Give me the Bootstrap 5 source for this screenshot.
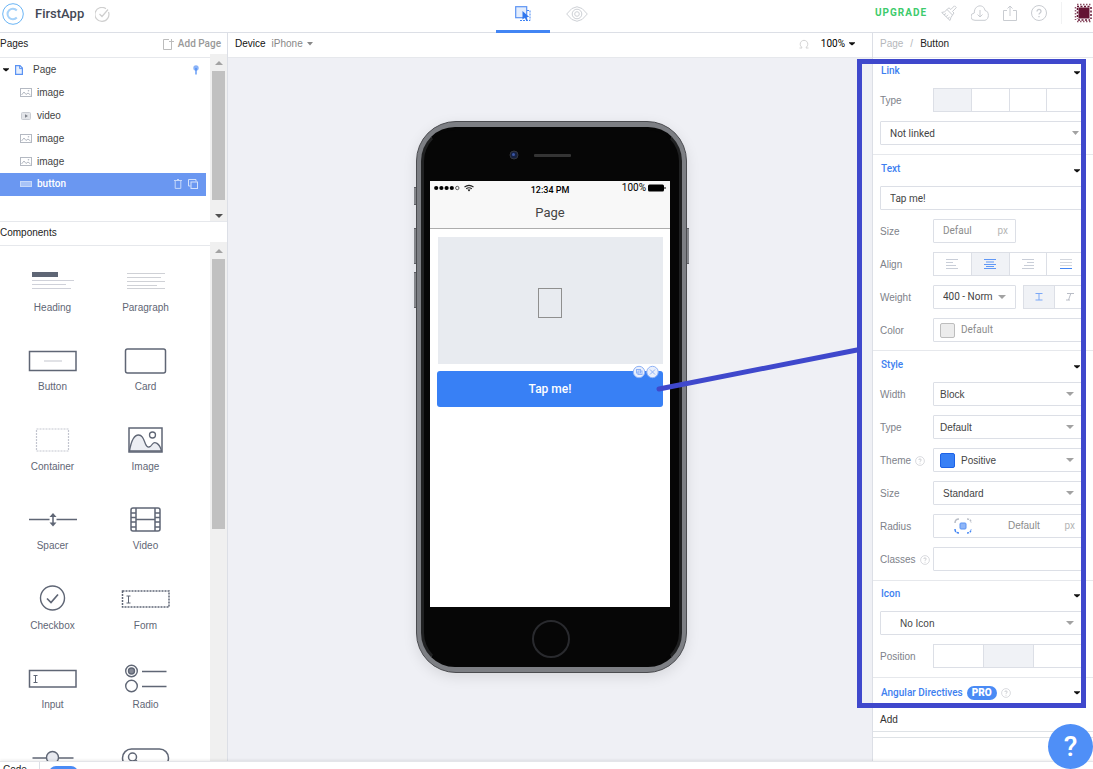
<!DOCTYPE html>
<html lang="en">
<head>
<meta charset="utf-8">
<meta name="viewport" content="width=device-width, initial-scale=1">
<title>FirstApp</title>
<link href="https://cdn.jsdelivr.net/npm/bootstrap@5.3.0/dist/css/bootstrap.min.css" rel="stylesheet">
<style>
:root{--line:#dcdfe6;--accent:#4285f4;--ink:#5f6675;--mute:#7e828a}
body{font-family:Roboto,"Liberation Sans",sans-serif;font-size:10px;line-height:12px;color:#222;background:#fff}
svg{display:block;flex:none}
button{font:inherit;color:inherit;background:none;border:0;padding:0}
a{color:inherit;text-decoration:none}
.app{height:100vh}
.plain{font-family:"Liberation Sans",Arial,sans-serif}
.side-l{width:228px;flex:none;border-right:1px solid var(--line)}
.side-r{width:221px;flex:none;border-left:1px solid var(--line)}
.topbar{height:33px;border-bottom:1px solid var(--line)}
.topbar .brand{width:228px;flex:none;padding:0 0 4px 2px;gap:11px}
.app-name{font-size:13px;line-height:18px;color:#444956;font-weight:500}
.tab-btn{width:54px;height:33px;padding-bottom:5px}
.tab-btn.active{border-bottom:3px solid var(--accent);padding-bottom:2px}
.tools{width:221px;flex:none;padding:0 0 6px 3px;overflow:hidden;color:#c9ccd1;gap:14px}
.upgrade{font-size:10px;font-weight:700;letter-spacing:1px;color:#3dcb6c}
.bar{height:25px;flex:none;border-bottom:1px solid #e6e8ec;padding-bottom:3px}
.tree-area{height:164px;flex:none;border-bottom:1px solid #e6e8ec}
.tree{padding:0 4px 0 0}
.tree-row{height:23px;padding:0 7px 0 20px;gap:5px;color:#444}
.tree-row.page-row{padding-left:3px}
.tree-row.active{background:#6a97f1;color:#fff;padding-bottom:1px}
.track{width:17px;flex:none;background:#f0f0f0;margin-top:-4px;padding:0 2px}
.track .thumb{background:#c1c1c1}
.arrow{height:17px;flex:none}
.comps{display:grid;grid-template-columns:93px 93px;grid-template-rows:repeat(4,79px 80px);padding:14px 0 0 6px;color:var(--ink);line-height:14px}
.comps svg{margin-bottom:1px}
.canvas{background:#eff0f5}
.stage{padding-top:63px}
.phone{width:271px;margin-left:3px;padding:5px 4px 5px 4px;border-radius:40px;background:#7d7f84;border:1px solid #4b4c50;box-shadow:0 4px 14px rgba(0,0,0,.10)}
.glass{border-radius:34px;background:#060606;border:3px solid #202122;border-top-color:#060606;border-bottom-color:#060606;padding:51px 9px 57px 6px}
.screen{height:426px;width:240px;background:#fff}
.navhead{height:48px;background:#f8f8f8;border-bottom:1px solid #adadad;color:#000}
.statusline{height:14px;padding:0 4px;font-size:9px}
.page-title{font-size:13px;line-height:16px;color:#444;padding-top:6px}
.thumb-box{height:127px;background:#e8ebf0;margin:8px 7px 7px 8px;padding:4px 2px 0 0}
.tap{height:36px;width:226px;margin-left:7px;background:#3880f5;color:#fff;border-radius:3px;font-size:12px;font-weight:500}
.camera{top:28px;left:92px}
.home{bottom:14px;left:115px;width:38px;height:38px;border:2px solid #292a2e;border-radius:50%}
.knob{width:2px;background:#85878c;border:1px solid #5d5e63;border-width:1px 0}
.sect{padding:0 10px 9px 7px;border-bottom:1px solid #e6e8ec}
.sect-title{height:30px;width:100%;padding:0 6px 4px 1px;color:#3e7ff0;font-weight:500;line-height:12px}
.sect-title .caret{margin-top:4px}
.prow{height:24px;margin-bottom:9px}
.prow:last-child{margin-bottom:0}
.plabel{width:53px;flex:none;color:var(--mute);padding-top:2px;font-family:"Liberation Sans",Arial,sans-serif}
.box{height:24px;border:1px solid var(--line);border-radius:1px;background:#fff;color:#444;font-size:10px;line-height:12px;padding:0 9px;min-width:0;appearance:none;box-shadow:none}
select.box{background:#fff url("data:image/svg+xml,%3Csvg xmlns='http://www.w3.org/2000/svg' width='8' height='4'%3E%3Cpath d='M0 0h8L4 4z' fill='%23a2a2a2'/%3E%3C/svg%3E") no-repeat right 9px center;padding-right:18px}
select.edge{background-position:right 6px center;background-size:7px 4px;padding-top:1px}
select.wide{background-position:right 11px center;padding-top:1px}
.tight{padding-left:6px}
.box input{border:0;padding:0;min-width:0;color:#8c8c8c;background:none;outline:0;line-height:12px}
.short{width:83px;flex:none}
.seg{height:24px;border:1px solid var(--line);display:flex;flex:1;margin-right:-1px}
.seg.four{margin-right:1px}
.seg button{flex:1;display:flex;align-items:center;justify-content:center}
.seg button+button{border-left:1px solid var(--line)}
.seg .on{background:#f0f2f6}
.seg.thirds{margin-right:2px}
.swatch{width:15px;height:15px;border-radius:2px;border:1px solid #1d62e6;background:#3880f5;flex:none}
.pro{background:#4a8bf5;color:#fff;border-radius:7px;font-weight:900;padding:1px 5px;font-size:10px}
.frame{left:-16px;top:26px;width:229px;height:649px;border:5px solid #3f48cc;pointer-events:none;z-index:3}
.pointer{right:234px;top:313px;z-index:3}
.help{right:0;bottom:0;width:45px;height:45px;border-radius:50%;background:#4f8ff7;color:#fff;font-size:28px;font-weight:500;line-height:45px;z-index:4}
.foot{height:8px;flex:none;overflow:hidden;background:#fff;border-top:1px solid #e4e5e9;box-shadow:0 -1px 3px rgba(0,0,0,.08);z-index:2}
.foot .tabname{width:40px;height:20px;flex:none;padding:2px 0 0 3px;border-right:1px solid var(--line)}
.foot .pill{width:29px;height:14px;border-radius:7px;background:#4a8bf5;margin:4px 0 0 9px}
</style>
</head>
<body>
<svg width="0" height="0" class="position-absolute" aria-hidden="true">
<defs>
<symbol id="pic" viewBox="0 0 12 9"><rect x=".5" y=".5" width="11" height="8" fill="#fff" stroke="#b4b9c2"/><path d="M1.500 7 4 4l2 2.500 2-1.500 2.500 2" fill="none" stroke="#b4b9c2"/><circle cx="8.500" cy="2.800" r=".8" fill="#b4b9c2"/></symbol>
<symbol id="q" viewBox="0 0 10 10"><circle cx="5" cy="5" r="4.400" fill="none" stroke="#d0d2d7" stroke-width=".8"/><path d="M3.800 4c0-1.600 2.400-1.500 2.400 0 0 .8-1.200.9-1.200 1.800M5 6.800v.8" fill="none" stroke="#bfc2c7" stroke-width=".8"/></symbol>
<symbol id="dn" viewBox="0 0 6 4"><path d="M0 .3h6v.7L3.500 3.200h-1L0 1z" fill="#111"/></symbol>
</defs>
</svg>
<div class="app d-flex flex-column overflow-hidden position-relative">
<header class="topbar d-flex flex-shrink-0">
  <div class="brand d-flex align-items-center">
    <svg width="22" height="22" viewBox="0 0 22 22" fill="none" stroke="#6bb5f5"><circle cx="11" cy="11" r="10.300"/><path d="M14.800 7.500a5.300 5.300 0 1 0 0 7" stroke-width="2" stroke="#a6d2f9"/></svg>
    <span class="app-name">FirstApp</span>
    <svg width="17" height="15" viewBox="0 0 17 15" fill="none" stroke="#cfcfcf" stroke-width="1.200"><path d="M13.500 5A7 7 0 1 1 11 1.700M4.500 7l2.500 2.500 6-7"/></svg>
  </div>
  <nav class="d-flex flex-fill justify-content-center">
    <button class="tab-btn active d-flex align-items-center justify-content-center" aria-label="Design">
      <svg width="16" height="16" viewBox="0 0 16 16"><rect x=".7" y=".7" width="11" height="11" fill="#e3edfd" stroke="#5b93f3" stroke-width="1.200"/><path d="M5 14.500h10v-10h-3" fill="none" stroke="#4285f4" stroke-dasharray="2 1"/><path d="M7.500 5v8.500l2.300-2 1.300 3 1.500-.7-1.200-2.800h2.800z" fill="#2f77ee"/></svg>
    </button>
    <button class="tab-btn d-flex align-items-center justify-content-center" aria-label="Preview">
      <svg width="22" height="16" viewBox="0 0 22 16" fill="none" stroke="#cdd0d5"><path d="M.7 8Q11-6.500 21.300 8 11 22.500.7 8z"/><circle cx="11" cy="8" r="4.800"/><circle cx="11" cy="8" r="2.300"/></svg>
    </button>
  </nav>
  <div class="tools d-flex align-items-center">
    <a href="#" class="upgrade">UPGRADE</a>
    <button aria-label="Theme"><svg width="16" height="16" viewBox="0 0 16 16" fill="none" stroke="currentColor"><path d="M.7 7.500Q4 7.500 6 4.500l5.500 5.500q-2 2.500-2.500 5.500zM6 4.500l2-1.700 1.800 1.700L13.500.8l1.800 1.800L11.500 6.500 13 8l-1.500 2M3 9.800 5 8.500M5 11.800l2-2M7 13.800l1.500-2"/></svg></button>
    <button aria-label="Download"><svg width="18" height="16" viewBox="0 0 18 16" fill="none" stroke="currentColor"><path d="M4 15.300A3.600 3.600 0 0 1 3.300 8C3-.5 13-1.500 14 5.500c4.500.5 4.500 9 0 9.800zM9 5v7M6.500 9.500 9 12l2.500-2.500"/></svg></button>
    <button aria-label="Share"><svg width="14" height="16" viewBox="0 0 14 16" fill="none" stroke="currentColor"><path d="M4 5.500H.5v10h13v-10H10M7 11V1M4.500 3.500 7 1l2.500 2.500"/></svg></button>
    <button aria-label="Help"><svg width="16" height="16" viewBox="0 0 16 16" fill="none" stroke="currentColor"><circle cx="8" cy="8" r="7.500"/><path d="M6 6.500c0-2.800 4-2.600 4 0C10 8 8 8 8 9.500M8 11v1.300" stroke-width="1.300"/></svg></button>
    <div class="d-flex align-items-center" style="gap:12px"><span class="vr" style="height:22px"></span>
    <svg width="18" height="20" viewBox="0 0 18 20"><rect x="4.500" y="4.500" width="11" height="11" fill="#641433"/><path d="M3 1.500h15M3 18.500h15M1.500 4v13" fill="none" stroke="#8d5267" stroke-width="1.500" stroke-dasharray="1.500 1.500"/><path d="M3 3.500h13M3.500 5v11M4 17h12M17 4v12" fill="none" stroke="#641433" stroke-width="1.500" stroke-dasharray="2 1.500"/></svg></div>
  </div>
</header>
<div class="d-flex flex-fill position-relative" style="min-height:0">
  <aside class="side-l plain d-flex flex-column">
    <div class="bar d-flex align-items-center justify-content-between" style="padding-right:6px">
      <span>Pages</span>
      <button class="d-flex align-items-center gap-1" style="color:#999;font-family:Roboto,sans-serif"><svg width="11" height="12" viewBox="0 0 11 12" fill="none" stroke="#bcbcbc"><path d="M6 1.500H.5v10h8V6M8.500 1v5M6 3.500h5"/></svg><span class="fw-medium">Add Page</span></button>
    </div>
    <div class="tree-area d-flex">
      <div class="tree flex-fill">
        <div class="tree-row page-row d-flex align-items-center">
          <svg width="6" height="4"><use href="#dn"/></svg>
          <svg class="me-1" width="10" height="10" viewBox="-1 0 10 10"><path d="M.6.6h4.400l2.400 2.400v6.400H.6z" fill="#e6effd" stroke="#5b93f3" stroke-width="1.200"/><path d="M4.600.6v3h2.800" fill="none" stroke="#5b93f3"/></svg>
          <span>Page</span>
          <svg class="ms-auto" width="6" height="10" viewBox="0 0 6 10"><circle cx="3" cy="3" r="2.700" fill="#8ab3f8"/><path d="M3 3v6.500" stroke="#4285f4" stroke-width="1.200"/></svg>
        </div>
        <div class="tree-row d-flex align-items-center"><svg width="12" height="9"><use href="#pic"/></svg>image</div>
        <div class="tree-row d-flex align-items-center"><svg width="12" height="8" viewBox="0 0 12 8"><rect x="1.500" y=".5" width="9" height="7" rx="1" fill="#e3e5e9" stroke="#c9ccd2"/><path d="M5 2.200v3.600L8 4z" fill="#7e828a"/></svg>video</div>
        <div class="tree-row d-flex align-items-center"><svg width="12" height="9"><use href="#pic"/></svg>image</div>
        <div class="tree-row d-flex align-items-center"><svg width="12" height="9"><use href="#pic"/></svg>image</div>
        <div class="tree-row active d-flex align-items-center"><svg width="12" height="6" viewBox="0 0 12 6"><rect x=".5" y=".5" width="11" height="5" fill="#a8c3f7" stroke="#c6d8fa"/></svg><span style="font-family:Roboto,sans-serif" class="fw-medium">button</span>
          <svg class="ms-auto" width="8" height="10" viewBox="0 0 8 10" fill="none" stroke="#c6d8fa"><path d="M0 1.500h8M1.200 2v7.400h5.600V2M3 .5h2"/></svg>
          <svg width="12" height="10" viewBox="-1 0 12 10" fill="none" stroke="#d3e1fb"><path d="M2.500 7H.5V.5H8v2"/><rect x="3" y="3" width="6.500" height="6.500"/></svg></div>
      </div>
      <div class="track d-flex flex-column" aria-hidden="true">
        <svg class="arrow" width="13" height="17"><path d="M3 11h8L7 7z" fill="#a3a3a3"/></svg>
        <div class="thumb flex-fill"></div>
        <svg class="mt-1" width="13" height="17"><path d="M3 10h8l-4 4z" fill="#505050"/></svg>
      </div>
    </div>
    <div class="bar d-flex align-items-center" style="height:24px;padding-bottom:2px">Components</div>
    <div class="d-flex flex-fill" style="min-height:0">
      <div class="comps flex-fill overflow-hidden text-center">
        <div><svg class="mx-auto" width="50" height="40" viewBox="0 0 50 40"><path d="M4 14.500h26" stroke="#5f6675" stroke-width="5"/><path d="M4 20.500h42M4 24.500h34M4 28.500h39" stroke="#cfd1d9"/></svg>Heading</div>
        <div><svg class="mx-auto" width="50" height="40" viewBox="0 0 50 40"><path d="M6 13.500h38M6 17.500h34M6 21.500h38M6 25.500h30M6 28.500h38" stroke="#cfd1d6" stroke-width="1.200"/></svg>Paragraph</div>
        <div><svg class="mx-auto" width="50" height="40" viewBox="0 0 50 40" fill="none"><rect x="1.500" y="12.500" width="46.500" height="19" stroke="#5f6675" stroke-width="1.500"/><path d="M16 22h18" stroke="#c3c5cd"/></svg>Button</div>
        <div><svg class="mx-auto" width="50" height="40" viewBox="0 0 50 40" fill="none"><rect x="4.500" y="10" width="40" height="24" rx="2" stroke="#5f6675" stroke-width="1.500"/></svg>Card</div>
        <div><svg class="mx-auto" width="50" height="40" viewBox="0 0 50 40" fill="none"><rect x="8.500" y="10" width="32" height="22" stroke="#c3c5cf" stroke-width="1.200" stroke-dasharray="2 1"/></svg>Container</div>
        <div><svg class="mx-auto" width="50" height="40" viewBox="0 -1 50 40"><path d="M8.500 31c2-12 5-16 9-16s5 4 7 9 5 3 7 0 7-1 9 7z" fill="#eceef3" stroke="#5f6675" stroke-width="1.300"/><rect x="8" y="8" width="33" height="24" fill="none" stroke="#5f6675" stroke-width="1.500"/><circle cx="31.500" cy="15" r="3" fill="none" stroke="#5f6675" stroke-width="1.300"/></svg>Image</div>
        <div><svg class="mx-auto" width="50" height="40" viewBox="0 -1 50 40"><path d="M1 20.500h20.500M28.500 20.500H49M25 15v11" stroke="#5f6675" stroke-width="1.500"/><path d="m21.500 18 3.500-4 3.500 4zM21.500 23.500l3.500 4 3.500-4z" fill="#5f6675"/></svg>Spacer</div>
        <div><svg class="mx-auto" width="50" height="40" viewBox="0 -1 50 40" fill="none" stroke="#5f6675" stroke-width="1.500"><rect x="10" y="9" width="29" height="23" rx="2"/><path d="M15 9v23M34 9v23M15 20.500h19M10 14h5M10 18.500h5M10 23h5M10 28h5M34 14h5M34 18.500h5M34 23h5M34 28h5"/></svg>Video</div>
        <div><svg class="mx-auto" width="50" height="40" viewBox="0 -1 50 40" fill="none" stroke="#5f6675" stroke-width="1.400"><circle cx="24.500" cy="19" r="12"/><path d="m19 19.500 4 4 7-8" stroke-width="1.700"/></svg>Checkbox</div>
        <div><svg class="mx-auto" width="50" height="40" viewBox="0 -1 50 40" fill="none" stroke="#5f6675" stroke-width="1.500"><rect x="1.500" y="12" width="46.500" height="16" stroke-dasharray="2 1"/><path d="M5.500 17h4M5.500 24h4M7.500 17v7" stroke-width="1"/></svg>Form</div>
        <div><svg class="mx-auto" width="50" height="40" viewBox="0 -1 50 40" fill="none" stroke="#5f6675" stroke-width="1.500"><rect x="1.500" y="12.500" width="46.500" height="16.500"/><path d="M5.500 17.500h4M5.500 24.500h4M7.500 17.500v7" stroke-width="1"/></svg>Input</div>
        <div><svg class="mx-auto" width="50" height="40" viewBox="0 -1 50 40" fill="none" stroke="#5f6675" stroke-width="1.400"><circle cx="10.500" cy="13" r="5.800"/><circle cx="10.500" cy="13" r="3" fill="#858995"/><circle cx="10.500" cy="28" r="5.800"/><path d="M21 13.500h24.500M21 28.500h24.500"/></svg>Radio</div>
        <div><svg class="mx-auto" width="50" height="40" viewBox="0 -1 50 40" fill="#e8eaf0" stroke="#5f6675" stroke-width="1.400"><path d="M4.500 20h41"/><circle cx="24.500" cy="19.500" r="6"/></svg></div>
        <div><svg class="mx-auto" width="50" height="40" viewBox="0 -1 50 40" fill="none" stroke="#5f6675" stroke-width="1.500"><rect x="1.500" y="11" width="46" height="18" rx="9"/><circle cx="11.500" cy="19" r="4"/><path d="m14.500 22 3 3"/></svg></div>
      </div>
      <div class="track d-flex flex-column" aria-hidden="true">
        <svg class="arrow" width="13" height="17"><path d="M3 11h8L7 7z" fill="#a3a3a3"/></svg>
        <div class="thumb" style="height:52%"></div>
      </div>
    </div>
  </aside>

  <main class="d-flex flex-column flex-fill">
    <div class="bar d-flex align-items-center pe-3" style="padding-left:7px">
      <label for="device" class="plain" style="color:#111">Device</label>
      <button id="device" class="plain d-flex align-items-center gap-1" style="color:#888;margin-left:6px">iPhone<svg width="6" height="4" viewBox="0 0 6 4"><path d="M0 0h6L3 3.500z" fill="#888"/></svg></button>
      <svg class="ms-auto" width="12" height="10" viewBox="0 0 12 10" fill="none" stroke="#d3d3d3"><path d="M4 9H1.500M4 9 3.500 8A3.800 3.800 0 1 1 8.500 8L8 9h2.500"/></svg>
      <button class="d-flex align-items-center gap-1 text-black" style="margin:0 1px 0 11px">100%<svg width="6" height="4"><use href="#dn"/></svg></button>
    </div>
    <div class="canvas stage flex-fill d-flex justify-content-center align-items-start overflow-hidden">
      <div class="phone position-relative">
        <i class="knob position-absolute" style="left:-3px;top:65px;height:18px"></i>
        <i class="knob position-absolute" style="left:-3px;top:106px;height:36px"></i>
        <i class="knob position-absolute" style="left:-3px;top:150px;height:36px"></i>
        <i class="knob position-absolute" style="right:-3px;top:106px;height:36px"></i>
        <svg class="camera position-absolute" width="64" height="10" viewBox="0 0 64 10"><circle cx="5" cy="5" r="4" fill="#15203f" stroke="#34363c"/><circle cx="4.500" cy="4.500" r="1.500" fill="#3a55a5"/><rect x="25" y="4" width="37" height="3" rx="1" fill="#343434"/></svg>
        <div class="glass">
          <div class="screen">
            <div class="navhead d-flex flex-column">
              <div class="statusline d-flex align-items-center justify-content-between position-relative">
                <svg width="42" height="8" viewBox="0 0 42 8"><g><circle cx="2.200" cy="4" r="2.100"/><circle cx="7.400" cy="4" r="2.100"/><circle cx="12.600" cy="4" r="2.100"/><circle cx="17.800" cy="4" r="2.100"/></g><circle cx="23.300" cy="4" r="1.700" fill="none" stroke="#222" stroke-width=".7"/><path d="M30.500 3q4.500-3.300 9 0M32.200 4.700q2.800-2 5.600 0" fill="none" stroke="#222" stroke-width="1.100"/><path d="M33.500 5.600h3L35 7.500z"/></svg>
                <span class="fw-medium position-absolute start-50 translate-middle-x pt-1">12:34 PM</span>
                <span class="d-flex align-items-center" style="font-size:10px;gap:2px">100%<svg width="18" height="8" viewBox="0 0 18 8"><rect width="16" height="7" rx="1.500" y=".5"/><path d="M16.500 3h1v2h-1z"/></svg></span>
              </div>
              <div class="page-title text-center mt-1">Page</div>
            </div>
            <div class="thumb-box d-flex align-items-center justify-content-center"><svg width="24" height="30"><rect x=".5" y=".5" width="23" height="29" fill="none" stroke="#8f8f8f"/></svg></div>
            <div class="position-relative">
              <button class="tap">Tap me!</button>
              <svg class="position-absolute" style="right:10px;top:-6px" width="28" height="14" viewBox="0 0 28 14" fill="none" stroke="#8fb2f6"><circle cx="7" cy="7" r="5.700" fill="#e9effc"/><rect x="4.500" y="4.500" width="4" height="3.500"/><rect x="6" y="6" width="4" height="3.500"/><circle cx="20.500" cy="7" r="5.700" fill="#e9effc"/><path d="m18 4.500 5 5m0-5-5 5"/></svg>
            </div>
          </div>
        </div>
        <div class="home position-absolute"></div>
      </div>
    </div>
  </main>

  <aside class="side-r position-relative d-flex flex-column">
    <div class="bar plain d-flex align-items-center" style="gap:7px;padding-left:7px"><a href="#" style="color:#b5b7bb">Page</a><span style="color:#b5b7bb">/</span><span>Button</span></div>
    <div class="d-flex flex-fill overflow-hidden">
    <form class="flex-fill">
      <section class="sect">
        <button type="button" class="sect-title d-flex align-items-center justify-content-between">Link<svg class="caret" width="6" height="4"><use href="#dn"/></svg></button>
        <div class="prow d-flex align-items-center"><span class="plabel">Type</span><div class="seg four"><button type="button" class="on" aria-label="None"></button><button type="button" aria-label="Page"></button><button type="button" aria-label="URL"></button><button type="button" aria-label="Email"></button></div></div>
        <div class="prow d-flex"><select class="box edge w-100" aria-label="Link target"><option>Not linked</option></select></div>
      </section>
      <section class="sect" style="padding-bottom:8px">
        <button type="button" class="sect-title d-flex align-items-center justify-content-between" style="height:31px">Text<svg class="caret" width="6" height="4"><use href="#dn"/></svg></button>
        <div class="prow d-flex"><input class="box w-100" value="Tap me!" aria-label="Text"></div>
        <div class="prow d-flex align-items-center"><label class="plabel" for="fs">Size</label><div class="box short d-flex align-items-center justify-content-between" style="padding-right:7px"><input id="fs" value="Defaul" style="width:40px"><span style="color:#b5b5b5">px</span></div></div>
        <div class="prow d-flex align-items-center"><span class="plabel">Align</span><div class="seg four">
          <button type="button" aria-label="Left"><svg width="12" height="10" viewBox="0 0 12 10" stroke="#c9ced8"><path d="M0 .5h12M0 3.500h7M0 6.500h10M0 9.500h12"/></svg></button>
          <button type="button" class="on" aria-label="Center"><svg width="12" height="10" viewBox="0 0 12 10" stroke="#5f97f6"><path d="M0 .5h12M2 3h8M0 5.500h12M2 7.500h8M0 9.500h12"/></svg></button>
          <button type="button" aria-label="Right"><svg width="12" height="10" viewBox="0 0 12 10" stroke="#c9ced8"><path d="M0 .5h12M5 3.500h7M2 6.500h10M0 9.500h12"/></svg></button>
          <button type="button" aria-label="Justify"><svg width="12" height="10" viewBox="0 0 12 10" stroke="#d3d7de"><path d="M0 .5h12M0 3.500h12M0 6.500h12"/><path d="M0 9.500h12" stroke="#4285f4"/></svg></button></div></div>
        <div class="prow d-flex align-items-center"><label class="plabel" for="fw">Weight</label><select id="fw" class="box short"><option>400 - Norm</option></select><div class="seg four" style="margin-left:7px">
          <button type="button" class="on" aria-label="Upright"><svg width="8" height="8" viewBox="0 0 8 8" stroke="#7ba8f7"><path d="M.5.5h7M.5 7h7M4 .5V7"/></svg></button>
          <button type="button" aria-label="Italic"><svg width="9" height="8" viewBox="0 0 9 8" stroke="#b9bdc6"><path d="M2 .5h7M1 7h4M5.800.5 3.500 7"/></svg></button></div></div>
        <div class="prow d-flex align-items-center"><label class="plabel" for="fc">Color</label><div class="box tight d-flex flex-fill align-items-center"><span class="swatch" style="background:#ececec;border-color:#bdbdbd"></span><input id="fc" class="w-75" style="margin-left:6px" value="Default"></div></div>
      </section>
      <section class="sect">
        <button type="button" class="sect-title d-flex align-items-center justify-content-between" style="height:31px">Style<svg class="caret" width="6" height="4"><use href="#dn"/></svg></button>
        <div class="prow d-flex align-items-center"><label class="plabel" for="sw">Width</label><select id="sw" class="box wide plain tight flex-fill"><option>Block</option></select></div>
        <div class="prow d-flex align-items-center"><label class="plabel" for="st">Type</label><select id="st" class="box wide plain tight flex-fill"><option>Default</option></select></div>
        <div class="prow d-flex align-items-center"><label class="plabel d-flex align-items-center gap-1" for="sth">Theme<svg width="10" height="10"><use href="#q"/></svg></label>
          <div class="flex-fill d-flex position-relative align-items-center"><select id="sth" class="box wide plain flex-fill" style="padding-left:27px"><option>Positive</option></select><span class="swatch position-absolute ms-2" style="left:-1px"></span></div></div>
        <div class="prow d-flex align-items-center"><label class="plabel" for="ss">Size</label><select id="ss" class="box wide plain flex-fill"><option>Standard</option></select></div>
        <div class="prow d-flex align-items-center"><label class="plabel" for="sr">Radius</label><div class="box flex-fill d-flex align-items-center" style="padding:0 7px 0 20px">
          <svg width="18" height="16" viewBox="0 0 18 16" fill="none" stroke-width="1.500"><rect x="6" y="5" width="6" height="6" rx="1" fill="#8fb6f8" stroke="#5b93f3" stroke-width="1"/><path d="M1 5q0-4 4-4" stroke="#b9bdc6"/><path d="M13 1q4 0 4 4" stroke="#b9bdc6" stroke-dasharray="2 1"/><path d="M1 11q0 4 4 4" stroke="#4285f4" stroke-dasharray="3 1"/><path d="M13 15q4 0 4-4" stroke="#4285f4" stroke-dasharray="2 1"/></svg>
          <input id="sr" class="plain" value="Default" style="width:44px;margin-left:36px"><span class="ms-auto" style="color:#b5b5b5;padding-right:3px">px</span></div></div>
        <div class="prow d-flex align-items-center"><label class="plabel d-flex align-items-center gap-1" for="sc">Classes<svg width="10" height="10"><use href="#q"/></svg></label><input id="sc" class="box flex-fill"></div>
      </section>
      <section class="sect">
        <button type="button" class="sect-title d-flex align-items-center justify-content-between">Icon<svg class="caret" width="6" height="4"><use href="#dn"/></svg></button>
        <div class="prow d-flex"><select class="box wide plain w-100" style="padding-left:19px" aria-label="Icon"><option>No Icon</option></select></div>
        <div class="prow d-flex align-items-center"><span class="plabel">Position</span><div class="seg thirds"><button type="button" aria-label="Left"></button><button type="button" class="on" aria-label="Center"></button><button type="button" aria-label="Right"></button></div></div>
      </section>
      <section>
        <div style="padding:0 10px 0 7px"><button type="button" class="sect-title d-flex align-items-center pb-0"><span>Angular Directives</span><span class="pro ms-1">PRO</span><svg class="ms-1" width="10" height="10"><use href="#q"/></svg><svg class="ms-auto" width="6" height="4"><use href="#dn"/></svg></button></div>
        <a href="#" class="plain d-block border-bottom" style="color:#333;height:24px;padding:6px 0 0 7px">Add</a>
        <div class="border-bottom" style="height:6px"></div>
      </section>
    </form>
    <div style="width:2px;background:#f0f0f0"></div>
    </div>
    <div class="frame position-absolute"></div>
  </aside>
  <svg class="pointer position-absolute" width="204" height="46" viewBox="0 0 204 46"><path d="M4 43 202 4" stroke="#3f48cc" stroke-width="5" stroke-linecap="round"/></svg>
</div>
<footer class="foot plain d-flex"><span class="tabname">Code</span><span class="pill"></span></footer>
<button class="help position-absolute" aria-label="Help">?</button>
</div>
<script src="https://cdn.jsdelivr.net/npm/bootstrap@5.3.0/dist/js/bootstrap.bundle.min.js"></script>
</body>
</html>
